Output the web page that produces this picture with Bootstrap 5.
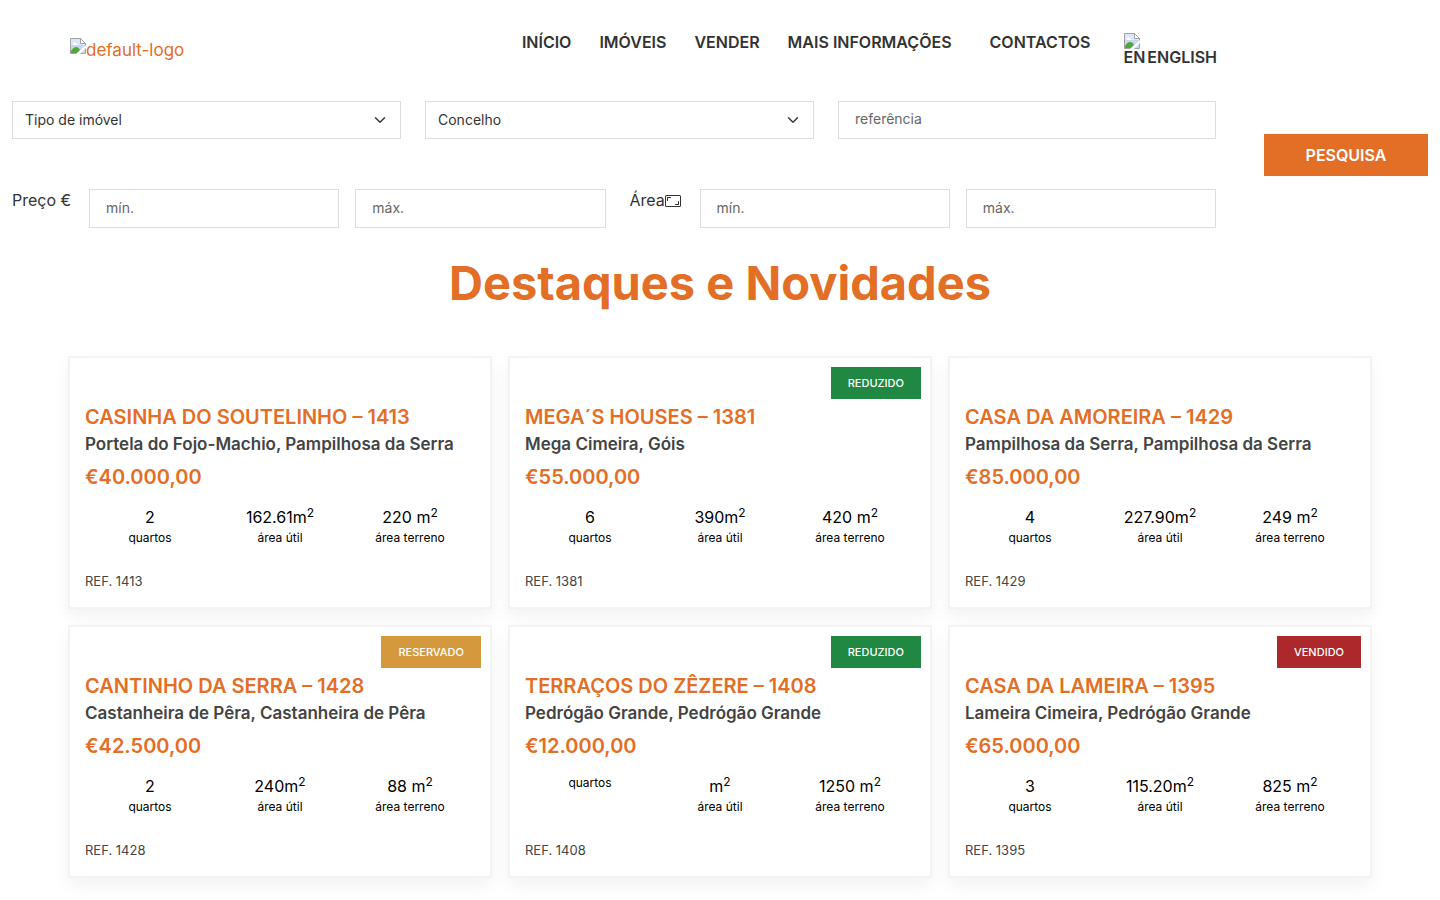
<!DOCTYPE html>
<html lang="pt">
<head>
<meta charset="utf-8">
<meta name="viewport" content="width=device-width, initial-scale=1">
<title>Destaques e Novidades</title>
<link href="https://cdn.jsdelivr.net/npm/bootstrap@5.3.0/dist/css/bootstrap.min.css" rel="stylesheet">
<style>
  :root { --brand: #e36e26; }
  body { font-family: Inter, "Open Sans", sans-serif; font-size: 16px; color: #333; background: #fff; }
  a { text-decoration: none; }
  .site-width { max-width: 1300px; }
  .site-header { min-height: 101px; }
  .site-logo { color: var(--brand); font-size: 17px; line-height: 24px; margin-top: 38px; }
  .site-menu { gap: 28px; margin-top: 30px; margin-right: 153px; font-weight: 600; line-height: 24px; }
  .site-menu a { color: #333; }
  .menu-contact { margin-left: 10px; }
  .menu-lang { display: inline-flex; align-items: flex-end; gap: 2px; margin: 3px 0 0 5px; }
  .lang-flag { display: flex; flex-direction: column; line-height: 16px; }
  .lang-name { line-height: 16px; }
  .search-bar { gap: 48px; padding: 0 12px; }
  .search-main { display: grid; grid-template-columns: 389fr 389fr 378fr; column-gap: 24px; }
  .search-box { border: 1px solid #dcdcdc; border-radius: 0; font-size: 14px; line-height: 22px; height: 38px; color: #333; }
  .search-box::placeholder { color: #666; opacity: 1; }
  input.search-box { padding: 5px 16px 8px; }
  .search-ranges { display: flex; gap: 16px; margin-top: 50px; }
  .search-ranges .search-box { flex: 1 1 0; min-width: 0; height: 39px; }
  .range-price, .range-area { line-height: 22px; white-space: nowrap; }
  .range-price { flex: 0 0 61px; }
  .range-area { flex: 0 0 54px; margin-left: 8px; }
  .btn-search { flex: 0 0 164px; height: 42px; margin-top: 33px; border: 0; border-radius: 0; background: var(--brand); color: #fff; font-weight: 600; }
  .page-title { color: var(--brand); font-size: 47px; font-weight: 700; line-height: 56px; margin: 27px 0 45px; }
  .listing { display: grid; grid-template-columns: repeat(3, 1fr); gap: 16px; max-width: 1304px; margin: 0 auto 22px; }
  .house { position: relative; border: 2px solid #f3f3f3; background: #fff; box-shadow: 0 8px 16px rgba(0, 0, 0, .05); padding: 47px 15px 16px; }
  .house-flag { position: absolute; top: 9px; right: 9px; padding: 0 17px; font-size: 11px; font-weight: 500; line-height: 32px; color: #fff; }
  .flag-green { background: #208843; }
  .flag-amber { background: #d5993d; }
  .flag-red { background: #ac282b; }
  .house-name { color: var(--brand); font-size: 20px; font-weight: 600; line-height: 24px; margin: 0 0 3px; }
  .house-place { color: #444; font-size: 17px; font-weight: 600; line-height: 24px; margin: 0 0 9px; }
  .house-price { color: var(--brand); font-size: 20px; font-weight: 600; line-height: 24px; margin: 0 0 16px; }
  .house-facts { display: grid; grid-template-columns: repeat(3, 1fr); align-items: start; text-align: center; color: #000; margin: 0 0 24px; }
  .fact-value { line-height: 24px; }
  .fact-value sup { font-size: 12px; line-height: 0; }
  .fact-label { font-size: 12px; line-height: 18px; }
  .house-ref { color: #444; font-size: 13px; line-height: 20px; margin: 0; }
</style>
</head>
<body>
<svg width="0" height="0" class="position-absolute" aria-hidden="true">
  <symbol id="missing" viewBox="0 0 16 16">
    <path d="M.5.5h10l5 5v10H.5z" fill="#c6d7f3" stroke="#a3a3a3"/>
    <path d="M1 1h9v5h5v1H1z" fill="#dce7f8"/>
    <path d="M3 6c0-2 3-2 3-.5C8 5 8 7 7 7H3z" fill="#fff"/>
    <path d="M1 15v-2c3-5 7-5 9-1l-3 3z" fill="#55a53d"/>
    <path d="M6 16 16 7v3l-6 6z" fill="#fff"/>
    <path d="M10.500.5v5h5z" fill="#fff" stroke="#a3a3a3"/>
  </symbol>
</svg>

<header class="site-header">
  <div class="site-width mx-auto d-flex justify-content-between align-items-start">
    <a class="site-logo d-flex" href="#"><svg width="16" height="16" aria-hidden="true"><use href="#missing"/></svg>default-logo</a>
    <nav class="site-menu d-flex align-items-start">
      <a href="#">INÍCIO</a>
      <a href="#">IMÓVEIS</a>
      <a href="#">VENDER</a>
      <a href="#">MAIS INFORMAÇÕES</a>
      <a class="menu-contact" href="#">CONTACTOS</a>
      <a class="menu-lang" href="#"><span class="lang-flag"><svg width="16" height="16" aria-hidden="true"><use href="#missing"/></svg>EN</span><span class="lang-name">ENGLISH</span></a>
    </nav>
  </div>
</header>

<main>
  <form class="search-bar d-flex align-items-start">
    <div class="flex-grow-1">
      <div class="search-main">
        <select class="form-select search-box" aria-label="Tipo de imóvel"><option>Tipo de imóvel</option></select>
        <select class="form-select search-box" aria-label="Concelho"><option>Concelho</option></select>
        <input class="form-control search-box" type="text" placeholder="referência" aria-label="referência">
      </div>
      <div class="search-ranges">
        <label class="range-price" for="price-min">Preço €</label>
        <input class="form-control search-box" id="price-min" type="text" placeholder="mín.">
        <input class="form-control search-box" type="text" placeholder="máx." aria-label="Preço máx.">
        <label class="range-area d-flex" for="area-min">Área<svg width="16" height="16" viewBox="0 0 16 16" fill="#333" class="mt-1" aria-hidden="true"><path d="M0 3.500A1.500 1.500 0 0 1 1.500 2h13A1.500 1.500 0 0 1 16 3.500v9a1.500 1.500 0 0 1-1.500 1.500h-13A1.500 1.500 0 0 1 0 12.500zM1.500 3a.5.5 0 0 0-.5.5v9a.5.5 0 0 0 .5.5h13a.5.5 0 0 0 .5-.5v-9a.5.5 0 0 0-.5-.5z"/><path d="M2 4.500a.5.5 0 0 1 .5-.5h3a.5.5 0 0 1 0 1H3v2.500a.5.5 0 0 1-1 0zm12 7a.5.5 0 0 1-.5.5h-3a.5.5 0 0 1 0-1H13V8.500a.5.5 0 0 1 1 0z"/></svg></label>
        <input class="form-control search-box" id="area-min" type="text" placeholder="mín.">
        <input class="form-control search-box" type="text" placeholder="máx." aria-label="Área máx.">
      </div>
    </div>
    <button class="btn btn-search" type="submit">PESQUISA</button>
  </form>

  <h1 class="page-title text-center">Destaques e Novidades</h1>

  <section class="listing">
    <article class="house">
      <h2 class="house-name">CASINHA DO SOUTELINHO – 1413</h2>
      <p class="house-place">Portela do Fojo-Machio, Pampilhosa da Serra</p>
      <p class="house-price">€40.000,00</p>
      <div class="house-facts">
        <div><div class="fact-value">2</div><div class="fact-label">quartos</div></div>
        <div><div class="fact-value">162.61m<sup>2</sup></div><div class="fact-label">área útil</div></div>
        <div><div class="fact-value">220 m<sup>2</sup></div><div class="fact-label">área terreno</div></div>
      </div>
      <p class="house-ref">REF. 1413</p>
    </article>
    <article class="house">
      <span class="house-flag flag-green">REDUZIDO</span>
      <h2 class="house-name">MEGA´S HOUSES – 1381</h2>
      <p class="house-place">Mega Cimeira, Góis</p>
      <p class="house-price">€55.000,00</p>
      <div class="house-facts">
        <div><div class="fact-value">6</div><div class="fact-label">quartos</div></div>
        <div><div class="fact-value">390m<sup>2</sup></div><div class="fact-label">área útil</div></div>
        <div><div class="fact-value">420 m<sup>2</sup></div><div class="fact-label">área terreno</div></div>
      </div>
      <p class="house-ref">REF. 1381</p>
    </article>
    <article class="house">
      <h2 class="house-name">CASA DA AMOREIRA – 1429</h2>
      <p class="house-place">Pampilhosa da Serra, Pampilhosa da Serra</p>
      <p class="house-price">€85.000,00</p>
      <div class="house-facts">
        <div><div class="fact-value">4</div><div class="fact-label">quartos</div></div>
        <div><div class="fact-value">227.90m<sup>2</sup></div><div class="fact-label">área útil</div></div>
        <div><div class="fact-value">249 m<sup>2</sup></div><div class="fact-label">área terreno</div></div>
      </div>
      <p class="house-ref">REF. 1429</p>
    </article>
    <article class="house">
      <span class="house-flag flag-amber">RESERVADO</span>
      <h2 class="house-name">CANTINHO DA SERRA – 1428</h2>
      <p class="house-place">Castanheira de Pêra, Castanheira de Pêra</p>
      <p class="house-price">€42.500,00</p>
      <div class="house-facts">
        <div><div class="fact-value">2</div><div class="fact-label">quartos</div></div>
        <div><div class="fact-value">240m<sup>2</sup></div><div class="fact-label">área útil</div></div>
        <div><div class="fact-value">88 m<sup>2</sup></div><div class="fact-label">área terreno</div></div>
      </div>
      <p class="house-ref">REF. 1428</p>
    </article>
    <article class="house">
      <span class="house-flag flag-green">REDUZIDO</span>
      <h2 class="house-name">TERRAÇOS DO ZÊZERE – 1408</h2>
      <p class="house-place">Pedrógão Grande, Pedrógão Grande</p>
      <p class="house-price">€12.000,00</p>
      <div class="house-facts">
        <div><div class="fact-label">quartos</div></div>
        <div><div class="fact-value">m<sup>2</sup></div><div class="fact-label">área útil</div></div>
        <div><div class="fact-value">1250 m<sup>2</sup></div><div class="fact-label">área terreno</div></div>
      </div>
      <p class="house-ref">REF. 1408</p>
    </article>
    <article class="house">
      <span class="house-flag flag-red">VENDIDO</span>
      <h2 class="house-name">CASA DA LAMEIRA – 1395</h2>
      <p class="house-place">Lameira Cimeira, Pedrógão Grande</p>
      <p class="house-price">€65.000,00</p>
      <div class="house-facts">
        <div><div class="fact-value">3</div><div class="fact-label">quartos</div></div>
        <div><div class="fact-value">115.20m<sup>2</sup></div><div class="fact-label">área útil</div></div>
        <div><div class="fact-value">825 m<sup>2</sup></div><div class="fact-label">área terreno</div></div>
      </div>
      <p class="house-ref">REF. 1395</p>
    </article>
  </section>
</main>
<script src="https://cdn.jsdelivr.net/npm/bootstrap@5.3.0/dist/js/bootstrap.bundle.min.js"></script>
</body>
</html>
